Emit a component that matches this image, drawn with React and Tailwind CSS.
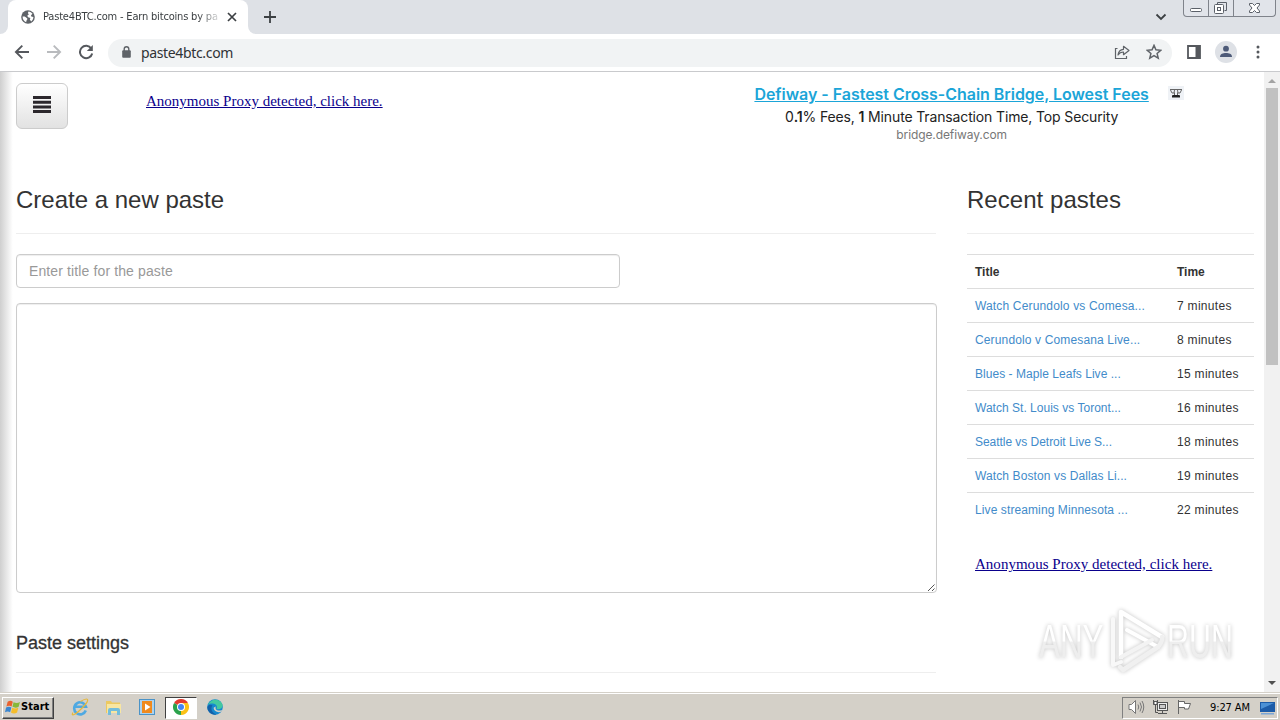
import React from "react";

const sans = "font-['Liberation_Sans',Arial,sans-serif]";
const serif = "font-['Liberation_Serif','Times_New_Roman',serif]";
const tahoma = "font-['DejaVu_Sans_Condensed','DejaVu_Sans',sans-serif]";

const pastes = [
  ["Watch Cerundolo vs Comesa...", "7 minutes", "tracking-[0.16px]"],
  ["Cerundolo v Comesana Live...", "8 minutes", "tracking-[0.14px]"],
  ["Blues - Maple Leafs Live ...", "15 minutes", "tracking-[0.04px]"],
  ["Watch St. Louis vs Toront...", "16 minutes", "tracking-[0.02px]"],
  ["Seattle vs Detroit Live S...", "18 minutes", "tracking-[-0.04px]"],
  ["Watch Boston vs Dallas Li...", "19 minutes", "tracking-[0.11px]"],
  ["Live streaming Minnesota ...", "22 minutes", "tracking-[0.1px]"],
];

function TabStrip() {
  return (
    <div className="flex h-[34px] shrink-0 items-start bg-[#dee1e6]">
      <div className="flex h-[34px] w-2 items-end bg-white">
        <div className="h-full w-2 rounded-br-lg bg-[#dee1e6]" />
      </div>
      <div className="h-[34px] w-60 bg-[#dee1e6]">
        <div className="flex h-[34px] items-center rounded-t-lg bg-white pl-[13px]">
          <svg width="14" height="14" viewBox="0 0 14 14" className="shrink-0">
            <circle cx="7" cy="7" r="6.8" fill="#5f6368" />
            <path d="M1.600 6.500c2-.4 3.300.4 4.100 1.500 1 .6.9 1.500 0 2.100l-.6 2.100C2.900 11.400 1.500 9.300 1.600 6.500z" fill="#fff" />
            <path d="M7.500 1.500c1.600.2 3.100 1 4 2.300L10 5.200l.3 1.300 2.100.6c0 1.800-.8 3.200-2.200 4.300l-1.400-2 .6-1.300-2.300-.8-.9-1.600 1.600-1.200L6.900 3z" fill="#fff" />
          </svg>
          <div className={`ml-2 w-[177px] overflow-hidden whitespace-nowrap pt-px text-[11px] tracking-[-0.18px] text-[#3c4043] [mask-image:linear-gradient(to_right,black_155px,transparent_180px)] ${tahoma}`}>
            Paste4BTC.com - Earn bitcoins by pa
          </div>
          <svg width="10" height="10" viewBox="0 0 10 10" className="ml-[7px]" stroke="#3c4043" strokeWidth="1.700">
            <path d="M1 1l8 8M9 1l-8 8" />
          </svg>
        </div>
      </div>
      <div className="flex h-[34px] w-2 bg-white">
        <div className="h-full w-2 rounded-bl-lg bg-[#dee1e6]" />
      </div>
      <svg width="14" height="14" viewBox="0 0 14 14" className="ml-[7px] mt-[10px]" stroke="#3c4043" strokeWidth="1.800">
        <path d="M7 1v12M1 7h12" />
      </svg>
      <div className="grow" />
      <svg width="12" height="8" viewBox="0 0 12 8" className="mr-4 mt-[13px]" fill="none" stroke="#3c4043" strokeWidth="1.800">
        <path d="M1.500 1.500L6 6l4.500-4.500" />
      </svg>
      <div className="mr-1 flex h-[17px] w-[93px] rounded-b border border-t-0 border-[#7f838b] bg-[#e1e4ea]">
        <svg width="91" height="16" viewBox="0 0 91 16" fill="none" stroke="#5b6069">
          <path d="M24.500 0v16M49.500 0v16" stroke="#7f838b" />
          <rect x="6.500" y="8.500" width="11" height="3" rx="1" fill="#fff" />
          <path d="M33.500 4.500v-2h9v8h-2" />
          <rect x="30.500" y="4.500" width="9" height="9" rx="1" fill="#fff" />
          <rect x="33.500" y="7.500" width="3" height="3" />
          <path d="M65.500 3.500h3l2 2 2-2h3v1.500L73 8l2.500 3v1.500h-3l-2-2-2 2h-3V11L68 8l-2.500-3z" fill="#fff" />
        </svg>
      </div>
    </div>
  );
}

function Toolbar() {
  return (
    <div className="flex h-[38px] shrink-0 items-center border-b border-[#c9cacd] bg-white pl-[14px]">
      <svg width="16" height="16" viewBox="0 0 16 16" className="-mt-px" fill="none" stroke="#55585d" strokeWidth="1.900">
        <path d="M15 8H2.500M8.300 1.600L1.900 8l6.400 6.400" />
      </svg>
      <svg width="16" height="16" viewBox="0 0 16 16" className="-mt-px ml-4" fill="none" stroke="#b9bbbe" strokeWidth="1.900">
        <path d="M1 8h12.500M7.700 1.600L14.100 8l-6.400 6.400" />
      </svg>
      <svg width="16" height="16" viewBox="0 0 16 16" className="-mt-px ml-4" fill="none" stroke="#55585d" strokeWidth="2">
        <path d="M13.300 4.500A6.200 6.200 0 1 0 14.200 9.500" />
        <path d="M14.800 1v6H8.800z" fill="#55585d" stroke="none" />
      </svg>
      <div className="ml-[14px] flex h-7 w-[1064px] items-center rounded-full bg-[#f1f3f4] pl-[14px]">
        <svg width="9" height="12" viewBox="0 0 9 12" className="-mt-0.5">
          <path d="M2.200 5V3a2.300 2.300 0 0 1 4.600 0v2" fill="none" stroke="#5f6368" strokeWidth="1.400" />
          <rect x="0.200" y="4.200" width="8.600" height="7.600" rx="1" fill="#5f6368" />
        </svg>
        <div className="ml-2.5 grow font-['Noto_Sans',sans-serif] text-[14px] tracking-[-0.35px] text-[#303236]">paste4btc.com</div>
        <svg width="16" height="14" viewBox="0 0 16 14" className="-mt-0.5 mr-[16px]" fill="none" stroke="#5f6368" strokeWidth="1.200">
          <path d="M3.500 3.500H1.500v10H12.500V11" />
          <path d="M4 10c.4-3.700 2.200-5.500 5.500-5.700V1.300L15 5.500l-5.500 4.200V7C7 7 5.300 8 4 10z" strokeLinejoin="round" />
        </svg>
        <svg width="16" height="16" viewBox="0 0 14 14" className="-mt-0.5 mr-2.5" fill="none" stroke="#5f6368" strokeWidth="1.300">
          <path d="M7 1.200l1.700 3.900 4.200.4-3.200 2.800 1 4.100L7 10.200l-3.700 2.200 1-4.100L1.100 5.500l4.200-.4z" />
        </svg>
      </div>
      <svg width="14" height="14" viewBox="0 0 14 14" className="-mt-0.5 ml-[15px]">
        <path d="M1 1h12v12H1z" fill="none" stroke="#55585d" strokeWidth="1.800" />
        <path d="M8.500 1H13v12H8.500z" fill="#55585d" />
      </svg>
      <svg width="22" height="22" viewBox="0 0 22 22" className="-mt-0.5 ml-[14px]">
        <circle cx="11" cy="11" r="11" fill="#dee1e6" />
        <circle cx="11" cy="7.700" r="2.900" fill="#4d5a78" />
        <path d="M5 16c0-3.200 3-4 6-4s6 .8 6 4z" fill="#4d5a78" />
      </svg>
      <svg width="4" height="14" viewBox="0 0 4 14" className="-mt-px ml-[19px]" fill="#55585d">
        <circle cx="2" cy="2" r="1.500" /><circle cx="2" cy="7" r="1.500" /><circle cx="2" cy="12" r="1.500" />
      </svg>
    </div>
  );
}

function Header() {
  return (
    <header className="flex h-[100px] items-start pt-[11px]">
      <button className="flex h-[46px] w-[52px] items-center justify-center rounded-md border border-[#ccc] bg-linear-to-b from-white to-[#e2e2e2]">
        <svg width="18" height="17" viewBox="0 0 18 17" fill="#2b272c" className="-mt-1">
          <path d="M0 0h18v3H0zM0 4.700h18v3H0zM0 9.400h18v3H0zM0 14h18v3H0z" />
        </svg>
      </button>
      <a className={`ml-[78px] mt-[9px] whitespace-nowrap text-[15px] leading-[18px] text-[#0a008c] underline ${serif}`}>Anonymous Proxy detected, click here.</a>
      <div className="ml-[352px] flex w-[434px] flex-col items-center font-['Inter',sans-serif]">
        <a className="whitespace-nowrap text-[16px] font-semibold leading-[22px] tracking-[-0.04px] text-[#1ba5d8] underline">Defiway - Fastest Cross-Chain Bridge, Lowest Fees</a>
        <div className="whitespace-nowrap text-[14px] leading-[23px] tracking-[-0.14px] text-[#222]">0<span className="font-semibold">.1</span>% Fees, <span className="font-semibold">1</span> Minute Transaction Time, Top Security</div>
        <div className="whitespace-nowrap text-[12px] leading-[13px] tracking-[-0.1px] text-[#777]">bridge.defiway.com</div>
      </div>
      <svg width="16" height="14" viewBox="0 0 16 14" className="-ml-px mt-[3px]">
        <rect width="16" height="14" fill="#eff2f6" />
        <path d="M2 3.500h12M2.500 4l1.500 3h2L6.500 4M13.500 4L12 7h-2L9.500 4M6.500 6.500v2.500M9.500 6.500v2.500" fill="none" stroke="#666" />
        <path d="M4 11.500V10q0-1 1-1h6q1 0 1 1v1.500z" fill="#222" />
      </svg>
    </header>
  );
}

function PasteForm() {
  return (
    <section className="w-[921px] shrink-0">
      <h2 className="h-[61px] whitespace-nowrap pt-[14px] text-[24px] leading-7 text-[#333]">Create a new paste</h2>
      <div className="mr-px h-px bg-[#eee]" />
      <div className="mt-5 flex h-[34px] w-[604px] items-center rounded border border-[#ccc] pl-3 text-[14px] tracking-[0.12px] text-[#999] shadow-[inset_0_1px_1px_rgba(0,0,0,0.07)]">Enter title for the paste</div>
      <div className="mt-[15px] flex h-[290px] items-end justify-end rounded border border-[#ccc] shadow-[inset_0_1px_1px_rgba(0,0,0,0.07)]">
        <svg width="9" height="9" viewBox="0 0 9 9" stroke="#555" strokeWidth="1">
          <path d="M1 8l6.500-6.500M5 8l2.500-2.500" />
        </svg>
      </div>
      <h4 className="mt-[38px] h-[41px] whitespace-nowrap text-[18px] leading-6 text-[#333] [-webkit-text-stroke:0.3px_#333]">Paste settings</h4>
      <div className="mr-px h-px bg-[#eee]" />
    </section>
  );
}

function RecentPastes() {
  return (
    <section className="ml-[30px] w-[287px] shrink-0">
      <h2 className="h-[61px] whitespace-nowrap pt-[14px] text-[24px] leading-7 tracking-[0.04px] text-[#333]">Recent pastes</h2>
      <div className="mb-5 h-px bg-[#eee]" />
      <div className="flex h-[34px] items-center border-t border-[#ddd] pl-2 text-[12px] font-bold text-[#333]">
        <span className="w-[202px]">Title</span>
        <span>Time</span>
      </div>
      {pastes.map(([title, time, tracking]) => (
        <div key={title} className="flex h-[34px] items-center border-t border-[#ddd] pl-2 text-[12px]">
          <a className={`w-[202px] whitespace-nowrap text-[#428bca] ${tracking}`}>{title}</a>
          <span className="whitespace-nowrap tracking-[0.3px] text-[#333]">{time}</span>
        </div>
      ))}
      <a className={`ml-2 mt-[29px] block whitespace-nowrap text-[15px] leading-[18px] tracking-[0.02px] text-[#0a008c] underline ${serif}`}>Anonymous Proxy detected, click here.</a>
    </section>
  );
}

function Watermark() {
  return (
    <div className="absolute left-[1036px] top-[533px] flex h-[72px] w-[204px] items-center [filter:drop-shadow(0_0_2px_rgba(0,0,0,0.24))]">
      <div className="w-[70px]">
        <span className="ml-[3px] inline-block origin-left scale-x-[0.64] bg-linear-to-b from-white from-50% to-[#eeeeee] to-52% bg-clip-text text-[49px] leading-[56px] text-transparent">ANY</span>
      </div>
      <svg width="62" height="68" viewBox="0 0 62 68" className="shrink-0" fill="none" strokeLinejoin="round" strokeLinecap="round">
        <path d="M7 12v46l8-3" stroke="#f8f8f8" strokeWidth="4" />
        <path d="M15 50V5L56 30" stroke="#fff" strokeWidth="4.500" />
        <path d="M21 23l31 17" stroke="#fff" strokeWidth="4" />
        <path d="M15 50l31-17" stroke="#f3f3f3" strokeWidth="4" />
        <path d="M56 30q1 4-4 10L17 63l-3-3" stroke="#f0f0f0" strokeWidth="4.500" />
      </svg>
      <div className="w-[70px]">
        <span className="-ml-px inline-block origin-left scale-x-[0.62] bg-linear-to-b from-white from-50% to-[#eeeeee] to-52% bg-clip-text text-[49px] leading-[56px] text-transparent">RUN</span>
      </div>
    </div>
  );
}

function Scrollbar() {
  return (
    <div className="flex w-4 shrink-0 flex-col items-center bg-[#f1f1f1]">
      <svg width="8" height="16" viewBox="0 0 8 16" fill="#a3a3a3"><path d="M0 11l4-4 4 4z" /></svg>
      <div className="h-[277px] w-3 bg-[#c1c1c1]" />
      <div className="grow" />
      <svg width="8" height="16" viewBox="0 0 8 16" fill="#505050"><path d="M0 5h8L4 9z" /></svg>
    </div>
  );
}

function Taskbar() {
  return (
    <div className="flex h-7 shrink-0 items-center border-t border-[#d4d0c8] bg-[#d4d0c8] shadow-[inset_0_1px_0_white]">
      <div className="ml-0.5 mt-[3px] flex h-[22px] w-[52px] items-center border border-b-[#404040] border-l-white border-r-[#404040] border-t-white pl-0.5 shadow-[inset_-1px_-1px_0_#808080]">
        <svg width="16" height="15" viewBox="0 0 15 14" className="-mt-0.5 shrink-0">
          <path d="M2.500 1.500C4.500.3 6 .6 7.300 1.500L6.200 6C4.700 5.200 3.200 5.200 1.300 6z" fill="#e9622f" />
          <path d="M8 2c2 1 4 1 6-.2l-1.200 4.600c-2 1.100-3.900 1-5.800 0z" fill="#86b83a" />
          <path d="M1 7c2-1 3.600-.8 5 0l-1.200 4.500c-1.500-.9-3-.9-4.800 0z" fill="#3a86d0" />
          <path d="M6.800 7.300c1.900 1 3.700 1 5.700 0l-1.200 4.500c-2 1.200-3.900 1-5.700 0z" fill="#f5bd2b" />
        </svg>
        <span className={`-mt-px text-[11px] font-bold tracking-[0.05px] text-black ${tahoma}`}>Start</span>
      </div>
      <svg width="18" height="18" viewBox="0 0 18 18" className="ml-[17px] mt-px" fill="none">
        <path d="M14.800 12.500A6 6 0 1 1 15 8.800H4" stroke="#4fa9e2" strokeWidth="2.600" />
        <path d="M2 14.500C-.5 18.500 4 17 8 13 13 8.500 17.500 3 16.500 1.500 15.800.5 12 2 9.500 3.500" stroke="#e6b83a" strokeWidth="1.200" />
      </svg>
      <svg width="18" height="18" viewBox="0 0 18 18" className="ml-4 mt-px">
        <path d="M1 3h5l1 1.500h8V15H1z" fill="#ecc961" />
        <path d="M2 6h14v9H2z" fill="#f8e6a1" />
        <path d="M3 17v-5q0-2 2-2h8q2 0 2 2v5h-3v-4H6v4z" fill="#73bddb" />
      </svg>
      <svg width="16" height="16" viewBox="0 0 16 16" className="ml-4 mt-px">
        <rect x="0.500" y="0.500" width="15" height="15" fill="#acd2ee" stroke="#4b93c7" />
        <rect x="3" y="2" width="10" height="12" fill="#f08a1d" />
        <path d="M6 4.500v7L11.500 8z" fill="#fff" />
      </svg>
      <div className="ml-2.5 mt-[3px] flex h-[22px] w-8 items-center justify-center border border-b-white border-l-[#404040] border-r-white border-t-[#404040] bg-white">
        <svg width="16" height="16" viewBox="0 0 16 16" className="-mt-0.5">
          <path d="M8 8L1.070 4A8 8 0 0 1 14.930 4z" fill="#e33b2e" />
          <path d="M8 8l6.930-4A8 8 0 0 1 8 16z" fill="#fbc116" />
          <path d="M8 8v8A8 8 0 0 1 1.070 4z" fill="#2ba24c" />
          <path d="M8 4h6.900L11.500 10 8 16z" fill="#fbc116" />
          <circle cx="8" cy="8" r="4" fill="#fff" />
          <circle cx="8" cy="8" r="3" fill="#4285f4" />
        </svg>
      </div>
      <svg width="16" height="16" viewBox="0 0 16 16" className="ml-2.5 mt-px">
        <circle cx="8" cy="8" r="7.800" fill="#1688ce" />
        <path d="M1 6C3 0 12-1.500 15.300 5c1.200 3.500-1.500 5.500-4.500 5.300-1.500 0-1.300-.9-.8-1.700C10.300 5 4.500 3 1 6z" fill="#43c8a0" />
        <path d="M5.500 6.500C3 9 5 14.500 9.500 15.500 5 16.500 0 13 .4 8 1.500 5.500 4 5 5.500 6.500z" fill="#1460a8" />
        <path d="M9 7.500c-1.500 2 .5 5 5.500 3.800.6-.1.700.1.200 1C11.500 14.500 6 12 6.800 8.500z" fill="#d4d0c8" />
      </svg>
      <div className="grow" />
      <div className="mr-0.5 mt-[3px] flex h-[22px] w-[156px] items-center border border-b-white border-l-[#808080] border-r-white border-t-[#808080] pl-[5px]">
        <svg width="17" height="16" viewBox="0 0 17 16" className="-mt-0.5" fill="none" stroke="#777">
          <path d="M1 5.500h2.500l4-4v13l-4-4H1z" fill="#fff" />
          <path d="M10 5.500q1.500 2.500 0 5M12 3.500q3 4.500 0 9M14 2q3.500 6 0 12" />
        </svg>
        <svg width="17" height="16" viewBox="0 0 17 16" className="-mt-0.5 ml-[7px]" fill="none" stroke="#555">
          <rect x="5.500" y="3.500" width="10" height="8" fill="#eee" />
          <rect x="7.500" y="5.500" width="6" height="4" fill="#ccc" />
          <path d="M6 14.500h9M10.500 12v2M1.500 1v4.500h4V1M3.500 5.500v8H6" />
          <path d="M2 2.500h3v3H2z" fill="#fff" />
        </svg>
        <svg width="16" height="16" viewBox="0 0 16 16" className="-mt-0.5 ml-[7px]" fill="#fff" stroke="#666">
          <path d="M2.500 1v14M2.500 2.500h6v2h6l-2 5.500H8.500V8.500h-6" />
        </svg>
        <span className={`ml-[18px] whitespace-nowrap text-[11px] tracking-[-0.12px] text-black ${tahoma}`}>9:27 AM</span>
        <svg width="15" height="14" viewBox="0 0 15 14" className="ml-2.5 shrink-0">
          <rect x="0" y="1" width="15" height="10" fill="#1d5ca8" />
          <path d="M1 2h13L1 8z" fill="#4c91d5" />
          <path d="M1 12h13v1.500H1z" fill="#7aa6d6" />
        </svg>
      </div>
    </div>
  );
}

export default function App() {
  return (
    <div className={`flex h-[720px] w-[1280px] flex-col overflow-hidden bg-white ${sans}`}>
      <TabStrip />
      <Toolbar />
      <div className="relative flex h-[620px] shrink-0 overflow-hidden">
        <div className="w-4 shrink-0 bg-linear-to-r from-[#cfcfcf] to-white to-80%" />
        <main className="w-[1248px] shrink-0">
          <Header />
          <div className="flex">
            <PasteForm />
            <RecentPastes />
          </div>
        </main>
        <Scrollbar />
        <Watermark />
      </div>
      <Taskbar />
    </div>
  );
}
